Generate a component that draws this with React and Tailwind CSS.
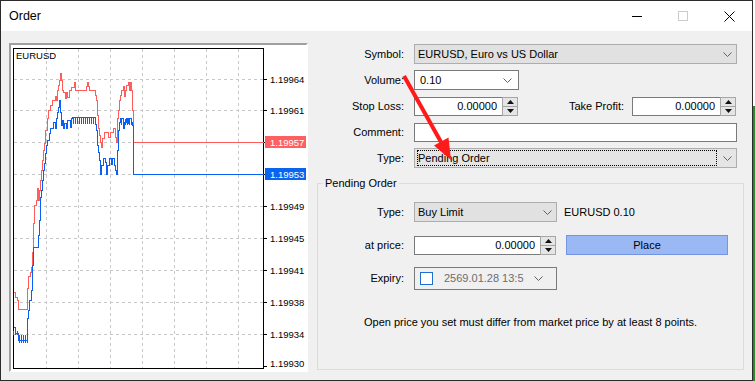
import React from 'react';

const ASK = '13,292 15,292 15,297 17,297 17,300 18,300 18,309 27,309 27,288 28,288 28,276 30,276 30,272 31,272 31,267 32,267 32,252 33,252 33,223 34,223 34,205 36,205 36,200 37,200 37,188 38,188 38,200 39,200 39,190 40,190 40,180 41,180 41,170 42,170 42,160 43,160 43,150 44,150 44,143 45,143 45,130 47,130 47,118 48,118 48,110 50,110 50,105 52,105 52,100 55,100 55,96 56,96 56,100 57,100 57,90 58,90 58,85 59,85 59,80 60,80 60,73 61,73 61,80 62,80 62,90 63,90 63,92 65,92 65,98 66,98 66,92 67,92 67,97 69,97 69,90 71,90 71,87 74,87 74,82 75,82 75,90 86,90 86,86 87,86 87,82 88,82 88,86 89,86 89,90 95,90 95,95 96,95 96,100 97,100 97,115 98,115 98,128 99,128 99,135 100,135 100,142 101,142 101,147 102,147 102,138 104,138 104,132 108,132 108,137 110,137 110,132 113,132 113,128 115,128 115,137 116,137 116,142 117,142 117,118 118,118 118,110 119,110 119,100 120,100 120,95 121,95 121,90 123,90 123,86 124,86 124,96 125,96 125,90 126,90 126,85 128,85 128,82 129,82 129,90 130,90 130,82 131,82 131,90 132,90 132,110 133,110 133,142 263,142';

const BID = '13,327 15,327 15,333 18,333 18,340 27,340 27,318 28,318 28,310 29,310 29,300 31,300 31,290 32,290 32,265 33,265 33,247 38,247 38,235 39,235 39,220 40,220 40,197 41,197 41,190 42,190 42,180 43,180 43,170 44,170 44,163 45,163 45,153 46,153 46,145 47,145 47,140 49,140 49,133 50,133 50,128 53,128 53,122 55,122 55,128 56,128 56,118 57,118 57,112 58,112 58,107 59,107 59,100 60,100 60,112 61,112 61,125 62,125 62,120 63,120 63,128 64,128 64,123 66,123 66,128 67,128 67,120 70,120 70,127 71,127 71,118 72,118 72,117 95,117 95,124 96,124 96,130 97,130 97,145 98,145 98,152 99,152 99,160 100,160 100,174 101,174 101,165 103,165 103,158 105,158 105,162 106,162 106,174 107,174 107,165 109,165 109,158 111,158 111,164 112,164 112,158 114,158 114,165 115,165 115,170 116,170 116,174 117,174 117,150 118,150 118,130 119,130 119,122 120,122 120,118 123,118 123,128 124,128 124,122 126,122 126,118 128,118 128,123 129,123 129,118 131,118 131,122 132,122 132,125 133,125 133,174 263,174';

const combs = () => {
  let d = '';
  for (let x = 73; x <= 94; x += 2) d += `M${x} 117V123`;
  for (let x = 19; x <= 27; x += 2) d += `M${x} 334V342`;
  for (let x = 13; x <= 17; x += 2) d += `M${x} 330V334`;
  for (let x = 121; x <= 131; x += 2) d += `M${x} 118V124`;
  return d;
};

const gridY = [79, 110, 142, 174, 206, 238, 270, 302, 334];
const gridX = [46, 78, 110, 142, 174, 206, 238];
const labels = [
  [79, '1.19964'], [110, '1.19961'], [206, '1.19949'], [238, '1.19945'],
  [270, '1.19941'], [302, '1.19938'], [334, '1.19934'], [363, '1.19930'],
];

const Chart = () => (
  <div className="w-[299px] h-[329px] border-2 border-t-[#a0a0a0] border-l-[#a0a0a0] border-r-white border-b-white bg-white">
    <svg width="295" height="325" viewBox="11 45 295 325" className="block" shapeRendering="crispEdges">
      <g stroke="#c8c8c8" strokeDasharray="3 3" strokeWidth="1">
        {gridY.map((y) => <line key={y} x1="14" x2="263" y1={y + 0.5} y2={y + 0.5} />)}
        {gridX.map((x) => <line key={x} x1={x + 0.5} x2={x + 0.5} y1="49" y2="368" />)}
      </g>
      <rect x="13.5" y="48.5" width="250" height="320" fill="none" stroke="#000" />
      <g stroke="#000">
        {[...gridY, 366].map((y) => <line key={y} x1="264" x2="267" y1={y + 0.5} y2={y + 0.5} />)}
      </g>
      <g transform="translate(0.5 0.5)" fill="none" strokeWidth="1">
        <polyline points={ASK} stroke="#ff5c5c" />
        <polyline points={BID} stroke="#0a5ff5" />
        <path d={combs()} stroke="#0a5ff5" />
      </g>
      <text x="16" y="59" fontSize="9.5" fill="#000" fontFamily="'Liberation Sans', Arial, sans-serif">EURUSD</text>
      <g fontSize="9.5" fill="#000" fontFamily="'Liberation Sans', Arial, sans-serif">
        {labels.map(([y, t]) => <text key={t} x="270" y={y + 3.5}>{t}</text>)}
      </g>
      <rect x="265" y="136" width="41" height="12" fill="#ff5f5f" />
      <text x="270" y="145.5" fontSize="9.5" fill="#fff" fontFamily="'Liberation Sans', Arial, sans-serif">1.19957</text>
      <rect x="265" y="168" width="41" height="12" fill="#0a64f0" />
      <text x="270" y="177.5" fontSize="9.5" fill="#fff" fontFamily="'Liberation Sans', Arial, sans-serif">1.19953</text>
    </svg>
  </div>
);

const Chevron = () => (
  <svg width="9" height="5" viewBox="0 0 9 5" className="block">
    <path d="M0.5 0.5 L4.5 4.5 L8.5 0.5" fill="none" stroke="#606060" strokeWidth="1" />
  </svg>
);

const Spin = () => (
  <div className="w-[16px] h-full border border-[#a6a6a6] bg-[#e5e5e5] flex flex-col -ml-px">
    <div className="flex-1 flex items-center justify-center border-b border-[#a6a6a6]">
      <svg width="7" height="4" viewBox="0 0 7 4"><path d="M3.5 0 L7 4 L0 4Z" fill="#111" /></svg>
    </div>
    <div className="flex-1 flex items-center justify-center">
      <svg width="7" height="4" viewBox="0 0 7 4"><path d="M0 0 L7 0 L3.5 4Z" fill="#111" /></svg>
    </div>
  </div>
);

const NumberField = ({ value, w }) => (
  <div className="flex h-[19px]">
    <div className={`${w} h-full border border-[#7a7a7a] bg-white flex items-center justify-end pr-[5px]`}>{value}</div>
    <Spin />
  </div>
);

const Label = ({ children, w = 'w-[88px]' }) => (
  <div className={`${w} shrink-0 text-right pr-[1px]`}>{children}</div>
);

export default function App() {
  return (
    <div className="w-[755px] h-[381px] bg-white flex font-['Liberation_Sans',Arial,sans-serif] text-[11px] text-black">
      <div className="relative w-[753px] h-[381px] border border-[#2b2b2b] flex flex-col">
        {/* title bar */}
        <div className="h-[30px] bg-white flex items-center shrink-0">
          <div className="pl-[8px] text-[12.5px] flex-1">Order</div>
          <div className="w-[46px] h-full flex items-center justify-center">
            <div className="w-[10px] h-px bg-black" />
          </div>
          <div className="w-[46px] h-full flex items-center justify-center">
            <div className="w-[10px] h-[10px] border border-[#cccccc]" />
          </div>
          <div className="w-[46px] h-full flex items-center justify-center">
            <svg width="11" height="11" viewBox="0 0 11 11"><path d="M0.5 0.5 L10.5 10.5 M10.5 0.5 L0.5 10.5" stroke="#000" strokeWidth="1" /></svg>
          </div>
        </div>

        {/* body */}
        <div className="flex-1 bg-[#f0f0f0] flex pl-[8px] pt-[12px]">
          <Chart />

          <div className="ml-[9px] w-[427px] flex flex-col">
            <div className="mt-px flex items-center h-[20px]">
              <Label>Symbol:</Label>
              <div className="ml-[9px] w-[323px] h-full border border-[#adadad] bg-[#e1e1e1] flex items-center pl-[3px] pr-[4px]">
                <span className="flex-1">EURUSD, Euro vs US Dollar</span>
                <Chevron />
              </div>
            </div>

            <div className="mt-[6px] flex items-center h-[20px]">
              <Label>Volume:</Label>
              <div className="ml-[9px] w-[105px] h-full border border-[#7a7a7a] bg-white flex items-center pl-[5px] pr-[6px]">
                <span className="flex-1">0.10</span>
                <Chevron />
              </div>
            </div>

            <div className="mt-[7px] flex items-center h-[19px]">
              <Label>Stop Loss:</Label>
              <div className="ml-[9px]">
                <NumberField value="0.00000" w="w-[89px]" />
              </div>
              <div className="flex-1 text-right pr-[8px]">Take Profit:</div>
              <div className="mr-[8px]">
                <NumberField value="0.00000" w="w-[89px]" />
              </div>
            </div>

            <div className="mt-[7px] flex items-center h-[19px]">
              <Label>Comment:</Label>
              <div className="ml-[9px] w-[323px] h-full border border-[#7a7a7a] bg-white" />
            </div>

            <div className="mt-[6px] flex items-center h-[20px]">
              <Label>Type:</Label>
              <div className="ml-[9px] w-[323px] h-full border border-[#adadad] bg-[#e5e5e5] flex items-center pl-[2px] pr-[4px]">
                <div className="w-[300px] h-[16px] border border-dotted border-black flex items-center">Pending Order</div>
                <div className="flex-1" />
                <Chevron />
              </div>
            </div>

            {/* group box */}
            <div className="mt-[15px] h-[187px] border border-[#dcdcdc] flex flex-col">
              <div className="-mt-[8px] ml-[5px] self-start px-[2px] bg-[#f0f0f0] leading-[15px]">Pending Order</div>

              <div className="mt-[11px] flex items-center h-[20px]">
                <Label w="w-[87px]">Type:</Label>
                <div className="ml-[9px] w-[143px] h-full border border-[#adadad] bg-[#e1e1e1] flex items-center pl-[3px] pr-[4px]">
                  <span className="flex-1">Buy Limit</span>
                  <Chevron />
                </div>
                <div className="ml-[7px]">EURUSD 0.10</div>
              </div>

              <div className="mt-[13px] flex items-center h-[20px]">
                <Label w="w-[87px]">at price:</Label>
                <div className="ml-[9px]">
                  <NumberField value="0.00000" w="w-[127px]" />
                </div>
                <div className="ml-[10px] w-[162px] h-[20px] border border-[#7496e0] bg-[#99b8f4] flex items-center justify-center">Place</div>
              </div>

              <div className="mt-[12px] flex items-center h-[23px]">
                <Label w="w-[87px]">Expiry:</Label>
                <div className="ml-[9px] w-[143px] h-full border border-[#7a7a7a] bg-[#f0f0f0] flex items-center pl-[5px]">
                  <div className="w-[13px] h-[13px] border border-[#1e6fd0] bg-white shrink-0" />
                  <div className="ml-[11px] w-[78px] whitespace-nowrap text-[#6d6d6d]">2569.01.28 13:5</div>
                  <div className="ml-[12px]"><Chevron /></div>
                </div>
              </div>

              <div className="mt-[25px] text-center leading-[15px]">
                Open price you set must differ from market price by at least 8 points.
              </div>
            </div>
          </div>
        </div>

        {/* annotation arrow */}
        <svg className="absolute left-[-1px] top-[-1px] pointer-events-none" width="755" height="381" viewBox="0 0 755 381">
          <line x1="404" y1="76" x2="441" y2="142" stroke="#ff1a1a" strokeWidth="4" />
          <path d="M451 160 L434 145.5 L448.5 137.5 Z" fill="#ff1a1a" />
        </svg>
      </div>
      <div className="w-[2px] h-full flex flex-col">
        <div className="h-[106px] bg-white" />
        <div className="flex-1 bg-[#2a8a2a]" />
      </div>
    </div>
  );
}
